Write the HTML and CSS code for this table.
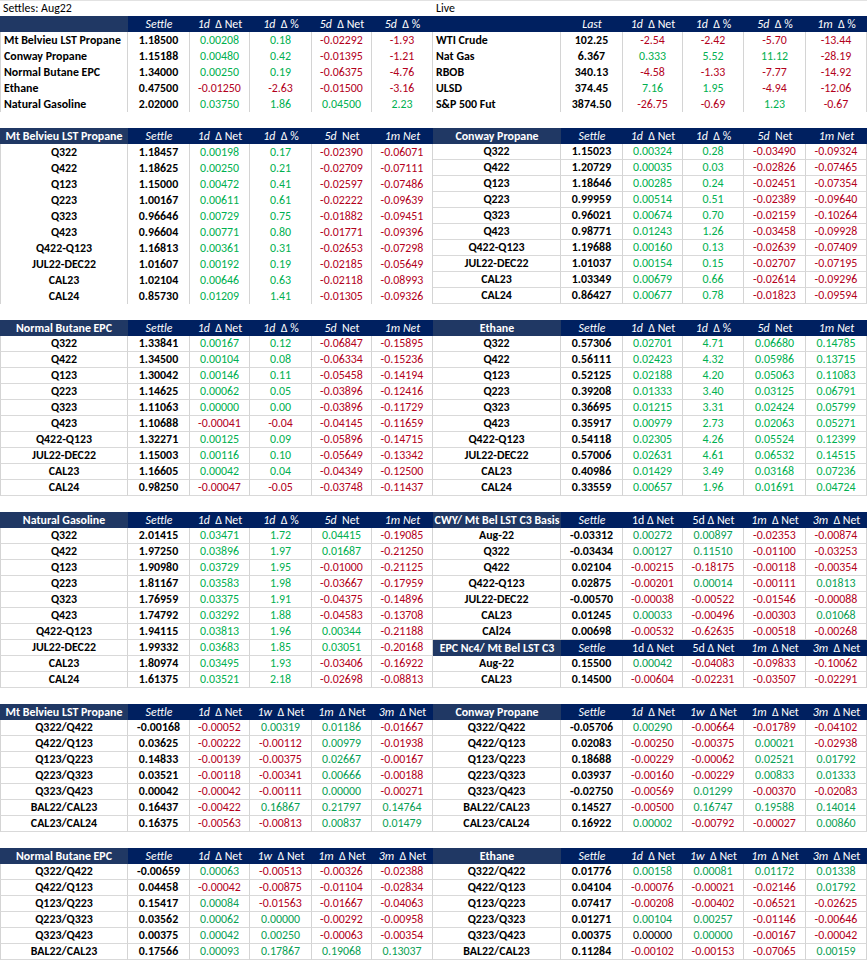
FILE: index.html
```html
<!DOCTYPE html>
<html>
<head>
<meta charset="utf-8">
<link rel="stylesheet" href="styles.css">
</head>
<body>
<div class="sheet">

<div class="blk">
  <div class="t L top">
    <span class="cap">Settles: Aug22</span>
    <span class="h hl"></span><span class="h"><i>Settle</i></span><span class="h"><i>1d</i>&nbsp; Δ Net</span><span class="h"><i>1d</i>&nbsp; Δ %</span><span class="h"><i>5d</i>&nbsp; Δ Net</span><span class="h"><i>5d</i>&nbsp; Δ %</span>
    <span class="a">Mt Belvieu LST Propane</span><span class="s">1.18500</span><span class="g">0.00208</span><span class="g">0.18</span><span class="r">-0.02292</span><span class="r">-1.93</span>
    <span class="a">Conway Propane</span><span class="s">1.15188</span><span class="g">0.00480</span><span class="g">0.42</span><span class="r">-0.01395</span><span class="r">-1.21</span>
    <span class="a">Normal Butane EPC</span><span class="s">1.34000</span><span class="g">0.00250</span><span class="g">0.19</span><span class="r">-0.06375</span><span class="r">-4.76</span>
    <span class="a">Ethane</span><span class="s">0.47500</span><span class="r">-0.01250</span><span class="r">-2.63</span><span class="r">-0.01500</span><span class="r">-3.16</span>
    <span class="a">Natural Gasoline</span><span class="s">2.02000</span><span class="g">0.03750</span><span class="g">1.86</span><span class="g">0.04500</span><span class="g">2.23</span>
  </div>
  <div class="t R top">
    <span class="cap">Live</span>
    <span class="h"></span><span class="h"><i>Last</i></span><span class="h"><i>1d</i>&nbsp; Δ Net</span><span class="h"><i>1d</i>&nbsp; Δ %</span><span class="h"><i>5d</i>&nbsp; Δ %</span><span class="h"><i>1m</i>&nbsp; Δ %</span>
    <span class="a">WTI Crude</span><span class="s">102.25</span><span class="r">-2.54</span><span class="r">-2.42</span><span class="r">-5.70</span><span class="r">-13.44</span>
    <span class="a">Nat Gas</span><span class="s">6.367</span><span class="g">0.333</span><span class="g">5.52</span><span class="g">11.12</span><span class="r">-28.19</span>
    <span class="a">RBOB</span><span class="s">340.13</span><span class="r">-4.58</span><span class="r">-1.33</span><span class="r">-7.77</span><span class="r">-14.92</span>
    <span class="a">ULSD</span><span class="s">374.45</span><span class="g">7.16</span><span class="g">1.95</span><span class="r">-4.94</span><span class="r">-12.06</span>
    <span class="a">S&amp;P 500 Fut</span><span class="s">3874.50</span><span class="r">-26.75</span><span class="r">-0.69</span><span class="g">1.23</span><span class="r">-0.67</span>
  </div>
</div>

<div class="blk">
  <div class="t L">
    <span class="h hl">Mt Belvieu LST Propane</span><span class="h"><i>Settle</i></span><span class="h"><i>1d</i>&nbsp; Δ Net</span><span class="h"><i>1d</i>&nbsp; Δ %</span><span class="h"><i>5d</i>&nbsp; Net</span><span class="h"><i>1m Net</i></span>
    <span class="a">Q322</span><span class="s">1.18457</span><span class="g">0.00198</span><span class="g">0.17</span><span class="r">-0.02390</span><span class="r">-0.06071</span>
    <span class="a">Q422</span><span class="s">1.18625</span><span class="g">0.00250</span><span class="g">0.21</span><span class="r">-0.02709</span><span class="r">-0.07111</span>
    <span class="a">Q123</span><span class="s">1.15000</span><span class="g">0.00472</span><span class="g">0.41</span><span class="r">-0.02597</span><span class="r">-0.07486</span>
    <span class="a">Q223</span><span class="s">1.00167</span><span class="g">0.00611</span><span class="g">0.61</span><span class="r">-0.02222</span><span class="r">-0.09639</span>
    <span class="a">Q323</span><span class="s">0.96646</span><span class="g">0.00729</span><span class="g">0.75</span><span class="r">-0.01882</span><span class="r">-0.09451</span>
    <span class="a">Q423</span><span class="s">0.96604</span><span class="g">0.00771</span><span class="g">0.80</span><span class="r">-0.01771</span><span class="r">-0.09396</span>
    <span class="a">Q422-Q123</span><span class="s">1.16813</span><span class="g">0.00361</span><span class="g">0.31</span><span class="r">-0.02653</span><span class="r">-0.07298</span>
    <span class="a">JUL22-DEC22</span><span class="s">1.01607</span><span class="g">0.00192</span><span class="g">0.19</span><span class="r">-0.02185</span><span class="r">-0.05649</span>
    <span class="a">CAL23</span><span class="s">1.02104</span><span class="g">0.00646</span><span class="g">0.63</span><span class="r">-0.02118</span><span class="r">-0.08993</span>
    <span class="a">CAL24</span><span class="s">0.85730</span><span class="g">0.01209</span><span class="g">1.41</span><span class="r">-0.01305</span><span class="r">-0.09326</span>
  </div>
  <div class="t R ln">
    <span class="h hl">Conway Propane</span><span class="h"><i>Settle</i></span><span class="h"><i>1d</i>&nbsp; Δ Net</span><span class="h"><i>1d</i>&nbsp; Δ %</span><span class="h"><i>5d</i>&nbsp; Net</span><span class="h"><i>1m Net</i></span>
    <span class="a">Q322</span><span class="s">1.15023</span><span class="g">0.00324</span><span class="g">0.28</span><span class="r">-0.03490</span><span class="r">-0.09324</span>
    <span class="a">Q422</span><span class="s">1.20729</span><span class="g">0.00035</span><span class="g">0.03</span><span class="r">-0.02826</span><span class="r">-0.07465</span>
    <span class="a">Q123</span><span class="s">1.18646</span><span class="g">0.00285</span><span class="g">0.24</span><span class="r">-0.02451</span><span class="r">-0.07354</span>
    <span class="a">Q223</span><span class="s">0.99959</span><span class="g">0.00514</span><span class="g">0.51</span><span class="r">-0.02389</span><span class="r">-0.09640</span>
    <span class="a">Q323</span><span class="s">0.96021</span><span class="g">0.00674</span><span class="g">0.70</span><span class="r">-0.02159</span><span class="r">-0.10264</span>
    <span class="a">Q423</span><span class="s">0.98771</span><span class="g">0.01243</span><span class="g">1.26</span><span class="r">-0.03458</span><span class="r">-0.09928</span>
    <span class="a">Q422-Q123</span><span class="s">1.19688</span><span class="g">0.00160</span><span class="g">0.13</span><span class="r">-0.02639</span><span class="r">-0.07409</span>
    <span class="a">JUL22-DEC22</span><span class="s">1.01037</span><span class="g">0.00154</span><span class="g">0.15</span><span class="r">-0.02707</span><span class="r">-0.07195</span>
    <span class="a">CAL23</span><span class="s">1.03349</span><span class="g">0.00679</span><span class="g">0.66</span><span class="r">-0.02614</span><span class="r">-0.09296</span>
    <span class="a">CAL24</span><span class="s">0.86427</span><span class="g">0.00677</span><span class="g">0.78</span><span class="r">-0.01823</span><span class="r">-0.09594</span>
  </div>
</div>

<div class="blk">
  <div class="t L ln">
    <span class="h hl">Normal Butane EPC</span><span class="h"><i>Settle</i></span><span class="h"><i>1d</i>&nbsp; Δ Net</span><span class="h"><i>1d</i>&nbsp; Δ %</span><span class="h"><i>5d</i>&nbsp; Net</span><span class="h"><i>1m Net</i></span>
    <span class="a">Q322</span><span class="s">1.33841</span><span class="g">0.00167</span><span class="g">0.12</span><span class="r">-0.06847</span><span class="r">-0.15895</span>
    <span class="a">Q422</span><span class="s">1.34500</span><span class="g">0.00104</span><span class="g">0.08</span><span class="r">-0.06334</span><span class="r">-0.15236</span>
    <span class="a">Q123</span><span class="s">1.30042</span><span class="g">0.00146</span><span class="g">0.11</span><span class="r">-0.05458</span><span class="r">-0.14194</span>
    <span class="a">Q223</span><span class="s">1.14625</span><span class="g">0.00062</span><span class="g">0.05</span><span class="r">-0.03896</span><span class="r">-0.12416</span>
    <span class="a">Q323</span><span class="s">1.11063</span><span class="g">0.00000</span><span class="g">0.00</span><span class="r">-0.03896</span><span class="r">-0.11729</span>
    <span class="a">Q423</span><span class="s">1.10688</span><span class="r">-0.00041</span><span class="r">-0.04</span><span class="r">-0.04145</span><span class="r">-0.11659</span>
    <span class="a">Q422-Q123</span><span class="s">1.32271</span><span class="g">0.00125</span><span class="g">0.09</span><span class="r">-0.05896</span><span class="r">-0.14715</span>
    <span class="a">JUL22-DEC22</span><span class="s">1.15003</span><span class="g">0.00116</span><span class="g">0.10</span><span class="r">-0.05649</span><span class="r">-0.13342</span>
    <span class="a">CAL23</span><span class="s">1.16605</span><span class="g">0.00042</span><span class="g">0.04</span><span class="r">-0.04349</span><span class="r">-0.12500</span>
    <span class="a">CAL24</span><span class="s">0.98250</span><span class="r">-0.00047</span><span class="r">-0.05</span><span class="r">-0.03748</span><span class="r">-0.11437</span>
  </div>
  <div class="t R ln">
    <span class="h hl">Ethane</span><span class="h"><i>Settle</i></span><span class="h"><i>1d</i>&nbsp; Δ Net</span><span class="h"><i>1d</i>&nbsp; Δ %</span><span class="h"><i>5d</i>&nbsp; Net</span><span class="h"><i>1m Net</i></span>
    <span class="a">Q322</span><span class="s">0.57306</span><span class="g">0.02701</span><span class="g">4.71</span><span class="g">0.06680</span><span class="g">0.14785</span>
    <span class="a">Q422</span><span class="s">0.56111</span><span class="g">0.02423</span><span class="g">4.32</span><span class="g">0.05986</span><span class="g">0.13715</span>
    <span class="a">Q123</span><span class="s">0.52125</span><span class="g">0.02188</span><span class="g">4.20</span><span class="g">0.05063</span><span class="g">0.11083</span>
    <span class="a">Q223</span><span class="s">0.39208</span><span class="g">0.01333</span><span class="g">3.40</span><span class="g">0.03125</span><span class="g">0.06791</span>
    <span class="a">Q323</span><span class="s">0.36695</span><span class="g">0.01215</span><span class="g">3.31</span><span class="g">0.02424</span><span class="g">0.05799</span>
    <span class="a">Q423</span><span class="s">0.35917</span><span class="g">0.00979</span><span class="g">2.73</span><span class="g">0.02063</span><span class="g">0.05271</span>
    <span class="a">Q422-Q123</span><span class="s">0.54118</span><span class="g">0.02305</span><span class="g">4.26</span><span class="g">0.05524</span><span class="g">0.12399</span>
    <span class="a">JUL22-DEC22</span><span class="s">0.57006</span><span class="g">0.02631</span><span class="g">4.61</span><span class="g">0.06532</span><span class="g">0.14515</span>
    <span class="a">CAL23</span><span class="s">0.40986</span><span class="g">0.01429</span><span class="g">3.49</span><span class="g">0.03168</span><span class="g">0.07236</span>
    <span class="a">CAL24</span><span class="s">0.33559</span><span class="g">0.00657</span><span class="g">1.96</span><span class="g">0.01691</span><span class="g">0.04724</span>
  </div>
</div>

<div class="blk">
  <div class="t L ln">
    <span class="h hl">Natural Gasoline</span><span class="h"><i>Settle</i></span><span class="h"><i>1d</i>&nbsp; Δ Net</span><span class="h"><i>1d</i>&nbsp; Δ %</span><span class="h"><i>5d</i>&nbsp; Net</span><span class="h"><i>1m Net</i></span>
    <span class="a">Q322</span><span class="s">2.01415</span><span class="g">0.03471</span><span class="g">1.72</span><span class="g">0.04415</span><span class="r">-0.19085</span>
    <span class="a">Q422</span><span class="s">1.97250</span><span class="g">0.03896</span><span class="g">1.97</span><span class="g">0.01687</span><span class="r">-0.21250</span>
    <span class="a">Q123</span><span class="s">1.90980</span><span class="g">0.03729</span><span class="g">1.95</span><span class="r">-0.01000</span><span class="r">-0.21125</span>
    <span class="a">Q223</span><span class="s">1.81167</span><span class="g">0.03583</span><span class="g">1.98</span><span class="r">-0.03667</span><span class="r">-0.17959</span>
    <span class="a">Q323</span><span class="s">1.76959</span><span class="g">0.03375</span><span class="g">1.91</span><span class="r">-0.04375</span><span class="r">-0.14896</span>
    <span class="a">Q423</span><span class="s">1.74792</span><span class="g">0.03292</span><span class="g">1.88</span><span class="r">-0.04583</span><span class="r">-0.13708</span>
    <span class="a">Q422-Q123</span><span class="s">1.94115</span><span class="g">0.03813</span><span class="g">1.96</span><span class="g">0.00344</span><span class="r">-0.21188</span>
    <span class="a">JUL22-DEC22</span><span class="s">1.99332</span><span class="g">0.03683</span><span class="g">1.85</span><span class="g">0.03051</span><span class="r">-0.20168</span>
    <span class="a">CAL23</span><span class="s">1.80974</span><span class="g">0.03495</span><span class="g">1.93</span><span class="r">-0.03406</span><span class="r">-0.16922</span>
    <span class="a">CAL24</span><span class="s">1.61375</span><span class="g">0.03521</span><span class="g">2.18</span><span class="r">-0.02698</span><span class="r">-0.08813</span>
  </div>
  <div class="t R ln sp">
    <span class="h hl">CWY/ Mt Bel LST C3 Basis</span><span class="h"><i>Settle</i></span><span class="h">1d Δ Net</span><span class="h hx">5d Δ Net</span><span class="h"><i>1m</i>&nbsp; Δ Net</span><span class="h"><i>3m</i>&nbsp; Δ Net</span>
    <span class="a">Aug-22</span><span class="s">-0.03312</span><span class="g">0.00272</span><span class="g">0.00897</span><span class="r">-0.02353</span><span class="r">-0.00874</span>
    <span class="a">Q322</span><span class="s">-0.03434</span><span class="g">0.00127</span><span class="g">0.11510</span><span class="r">-0.01100</span><span class="r">-0.03253</span>
    <span class="a">Q422</span><span class="s">0.02104</span><span class="r">-0.00215</span><span class="r">-0.18175</span><span class="r">-0.00118</span><span class="r">-0.00354</span>
    <span class="a">Q422-Q123</span><span class="s">0.02875</span><span class="r">-0.00201</span><span class="g">0.00014</span><span class="r">-0.00111</span><span class="g">0.01813</span>
    <span class="a">JUL22-DEC22</span><span class="s">-0.00570</span><span class="r">-0.00038</span><span class="r">-0.00522</span><span class="r">-0.01546</span><span class="r">-0.00088</span>
    <span class="a">CAL23</span><span class="s">0.01245</span><span class="g">0.00033</span><span class="r">-0.00496</span><span class="r">-0.00303</span><span class="g">0.01068</span>
    <span class="a">CAl24</span><span class="s">0.00698</span><span class="r">-0.00532</span><span class="r">-0.62635</span><span class="r">-0.00518</span><span class="r">-0.00268</span>
    <span class="h hl">EPC Nc4/ Mt Bel LST C3</span><span class="h"><i>Settle</i></span><span class="h">1d Δ Net</span><span class="h hx">5d Δ Net</span><span class="h"><i>1m</i>&nbsp; Δ Net</span><span class="h"><i>3m</i>&nbsp; Δ Net</span>
    <span class="a">Aug-22</span><span class="s">0.15500</span><span class="g">0.00042</span><span class="r">-0.04083</span><span class="r">-0.09833</span><span class="r">-0.10062</span>
    <span class="a">CAL23</span><span class="s">0.14500</span><span class="r">-0.00604</span><span class="r">-0.02231</span><span class="r">-0.03507</span><span class="r">-0.02291</span>
  </div>
</div>

<div class="blk">
  <div class="t L ln sp">
    <span class="h hl">Mt Belvieu LST Propane</span><span class="h"><i>Settle</i></span><span class="h"><i>1d</i>&nbsp; Δ Net</span><span class="h"><i>1w</i>&nbsp; Δ Net</span><span class="h"><i>1m</i>&nbsp; Δ Net</span><span class="h"><i>3m</i>&nbsp; Δ Net</span>
    <span class="a">Q322/Q422</span><span class="s">-0.00168</span><span class="r">-0.00052</span><span class="g">0.00319</span><span class="g">0.01186</span><span class="r">-0.01667</span>
    <span class="a">Q422/Q123</span><span class="s">0.03625</span><span class="r">-0.00222</span><span class="r">-0.00112</span><span class="g">0.00979</span><span class="r">-0.01938</span>
    <span class="a">Q123/Q223</span><span class="s">0.14833</span><span class="r">-0.00139</span><span class="r">-0.00375</span><span class="g">0.02667</span><span class="r">-0.00167</span>
    <span class="a">Q223/Q323</span><span class="s">0.03521</span><span class="r">-0.00118</span><span class="r">-0.00341</span><span class="g">0.00666</span><span class="r">-0.00188</span>
    <span class="a">Q323/Q423</span><span class="s">0.00042</span><span class="r">-0.00042</span><span class="r">-0.00111</span><span class="g">0.00000</span><span class="r">-0.00271</span>
    <span class="a">BAL22/CAL23</span><span class="s">0.16437</span><span class="r">-0.00422</span><span class="g">0.16867</span><span class="g">0.21797</span><span class="g">0.14764</span>
    <span class="a">CAL23/CAL24</span><span class="s">0.16375</span><span class="r">-0.00563</span><span class="r">-0.00813</span><span class="g">0.00837</span><span class="g">0.01479</span>
  </div>
  <div class="t R ln sp">
    <span class="h hl">Conway Propane</span><span class="h"><i>Settle</i></span><span class="h"><i>1d</i>&nbsp; Δ Net</span><span class="h"><i>1w</i>&nbsp; Δ Net</span><span class="h"><i>1m</i>&nbsp; Δ Net</span><span class="h"><i>3m</i>&nbsp; Δ Net</span>
    <span class="a">Q322/Q422</span><span class="s">-0.05706</span><span class="g">0.00290</span><span class="r">-0.00664</span><span class="r">-0.01789</span><span class="r">-0.04102</span>
    <span class="a">Q422/Q123</span><span class="s">0.02083</span><span class="r">-0.00250</span><span class="r">-0.00375</span><span class="g">0.00021</span><span class="r">-0.02938</span>
    <span class="a">Q123/Q223</span><span class="s">0.18688</span><span class="r">-0.00229</span><span class="r">-0.00062</span><span class="g">0.02521</span><span class="g">0.01792</span>
    <span class="a">Q223/Q323</span><span class="s">0.03937</span><span class="r">-0.00160</span><span class="r">-0.00229</span><span class="g">0.00833</span><span class="g">0.01333</span>
    <span class="a">Q323/Q423</span><span class="s">-0.02750</span><span class="r">-0.00569</span><span class="g">0.01299</span><span class="r">-0.00370</span><span class="r">-0.02083</span>
    <span class="a">BAL22/CAL23</span><span class="s">0.14527</span><span class="r">-0.00500</span><span class="g">0.16747</span><span class="g">0.19588</span><span class="g">0.14014</span>
    <span class="a">CAL23/CAL24</span><span class="s">0.16922</span><span class="g">0.00002</span><span class="r">-0.00792</span><span class="r">-0.00027</span><span class="g">0.00860</span>
  </div>
</div>

<div class="blk last">
  <div class="t L ln sp">
    <span class="h hl">Normal Butane EPC</span><span class="h"><i>Settle</i></span><span class="h"><i>1d</i>&nbsp; Δ Net</span><span class="h"><i>1w</i>&nbsp; Δ Net</span><span class="h"><i>1m</i>&nbsp; Δ Net</span><span class="h"><i>3m</i>&nbsp; Δ Net</span>
    <span class="a">Q322/Q422</span><span class="s">-0.00659</span><span class="g">0.00063</span><span class="r">-0.00513</span><span class="r">-0.00326</span><span class="r">-0.02388</span>
    <span class="a">Q422/Q123</span><span class="s">0.04458</span><span class="r">-0.00042</span><span class="r">-0.00875</span><span class="r">-0.01104</span><span class="r">-0.02834</span>
    <span class="a">Q123/Q223</span><span class="s">0.15417</span><span class="g">0.00084</span><span class="r">-0.01563</span><span class="r">-0.01667</span><span class="r">-0.04063</span>
    <span class="a">Q223/Q323</span><span class="s">0.03562</span><span class="g">0.00062</span><span class="g">0.00000</span><span class="r">-0.00292</span><span class="r">-0.00958</span>
    <span class="a">Q323/Q423</span><span class="s">0.00375</span><span class="g">0.00042</span><span class="g">0.00250</span><span class="r">-0.00063</span><span class="r">-0.00354</span>
    <span class="a">BAL22/CAL23</span><span class="s">0.17566</span><span class="g">0.00093</span><span class="g">0.17867</span><span class="g">0.19068</span><span class="g">0.13037</span>
  </div>
  <div class="t R ln sp">
    <span class="h hl">Ethane</span><span class="h"><i>Settle</i></span><span class="h"><i>1d</i>&nbsp; Δ Net</span><span class="h"><i>1w</i>&nbsp; Δ Net</span><span class="h"><i>1m</i>&nbsp; Δ Net</span><span class="h"><i>3m</i>&nbsp; Δ Net</span>
    <span class="a">Q322/Q422</span><span class="s">0.01776</span><span class="g">0.00158</span><span class="g">0.00081</span><span class="g">0.01172</span><span class="g">0.01338</span>
    <span class="a">Q422/Q123</span><span class="s">0.04104</span><span class="r">-0.00076</span><span class="r">-0.00021</span><span class="r">-0.02146</span><span class="g">0.01792</span>
    <span class="a">Q123/Q223</span><span class="s">0.07417</span><span class="r">-0.00208</span><span class="r">-0.00402</span><span class="r">-0.06521</span><span class="r">-0.02625</span>
    <span class="a">Q223/Q323</span><span class="s">0.01271</span><span class="g">0.00104</span><span class="g">0.00257</span><span class="r">-0.01146</span><span class="r">-0.00646</span>
    <span class="a">Q323/Q423</span><span class="s">0.00375</span><span class="k">0.00000</span><span class="g">0.00000</span><span class="r">-0.00167</span><span class="r">-0.00042</span>
    <span class="a">BAL22/CAL23</span><span class="s">0.11284</span><span class="r">-0.00102</span><span class="r">-0.00153</span><span class="r">-0.07065</span><span class="g">0.00159</span>
  </div>
</div>

</div>
</body>
</html>
```

FILE: styles.css
```css
html, body {
  margin: 0;
  padding: 0;
  background: #ffffff;
}

.sheet {
  width: 867px;
  font-family: Carlito, Lato, "Liberation Sans", sans-serif;
  font-size: 11.9px;
  color: #000000;
}

.blk {
  display: flex;
  padding-bottom: 16px;
}

.blk.last {
  padding-bottom: 0;
}

.t {
  display: grid;
  grid-auto-rows: 16px;
}

.t.L {
  width: 433px;
  grid-template-columns: 128px 62px 60px 62px 60px 61px;
}

.t.R {
  width: 434px;
  grid-template-columns: 128px 62px 60px 61px 62px 61px;
}

.t > span {
  box-sizing: border-box;
  border-right: 1px solid #d4d4d4;
  text-align: center;
  line-height: 16px;
  white-space: nowrap;
  overflow: hidden;
}

.t.L > .a {
  border-left: 1px solid #d4d4d4;
}

.t.ln > span {
  border-bottom: 1px solid #d9d9d9;
  line-height: 15px;
}

.t > .cap {
  grid-column: 1 / -1;
  text-align: left;
  padding-left: 3px;
  border: 0;
  border-top: 1px solid #e2e2e2;
  line-height: 15px;
}

.t > .h,
.t.ln > .h {
  background: #002060;
  color: #ffffff;
  border: 0;
  line-height: 16px;
}

.t > .hl,
.t.ln > .hl {
  background: #203864;
  font-weight: bold;
}

.t > .hx {
  background: #1f3864;
}

.a {
  font-weight: bold;
}

.top > .a {
  text-align: left;
  padding-left: 3px;
}

.s {
  font-weight: bold;
}

.g {
  color: #00b050;
}

.sp > .g {
  color: #0a9f55;
}

.r {
  color: #b3001b;
}

.k {
  color: #000000;
}
```
